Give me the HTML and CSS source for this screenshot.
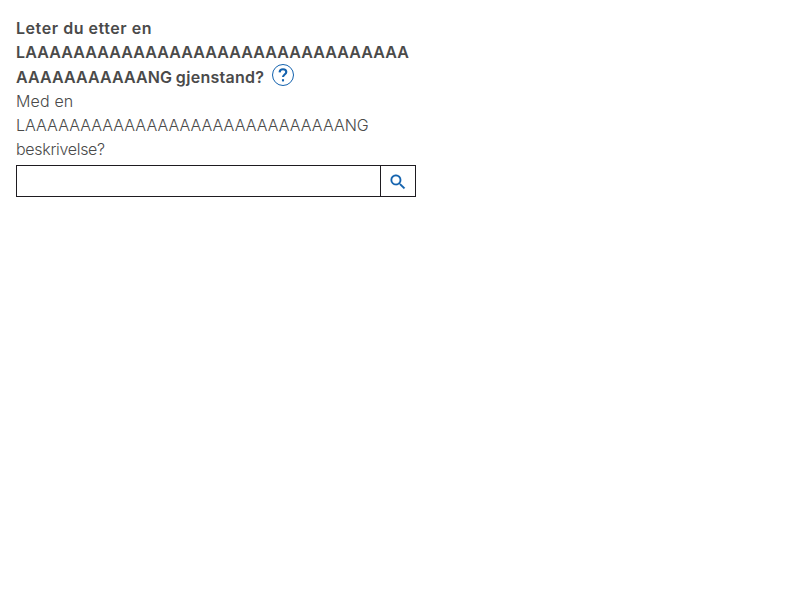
FILE: index.html
```html
<!DOCTYPE html>
<html lang="nb">
<head>
<meta charset="utf-8">
<title>Søk</title>
<link rel="stylesheet" href="styles.css">
</head>
<body>
<div class="field">
  <div class="label-row">
    <label class="label" for="search"><span class="intro">Leter du etter en</span> <span class="long">LAAAAAAAAAAAAAAAAAAAAAAAAAAAAAAAAAAAAAAAAAAANG</span> gjenstand?</label>
    <button class="help" type="button"><svg class="help-icon" viewBox="0 0 22 22"><circle cx="11" cy="11" r="10.5"/><path d="M7.6 8.4C7.7 6.5 9.1 5.2 11 5.2c2 0 3.3 1.2 3.3 2.9 0 2.3-3.3 2.6-3.3 4.9"/><path d="M11 15.2v2.2"/></svg></button>
  </div>
  <div class="description"><span class="start">Med en</span> <span class="long-desc">LAAAAAAAAAAAAAAAAAAAAAAAAAAAAANG</span> <span class="end">beskrivelse?</span></div>
  <div class="search">
    <input class="input" id="search" type="text">
    <button class="submit" type="button"><svg class="search-icon" viewBox="0 0 24 24"><path d="M15.5 14h-.79l-.28-.27A6.471 6.471 0 0 0 16 9.5 6.5 6.5 0 1 0 9.5 16c1.61 0 3.09-.59 4.23-1.57l.27.28v.79l5 4.99L20.49 19l-4.99-5zm-6 0C7.01 14 5 11.99 5 9.5S7.01 5 9.5 5 14 7.01 14 9.5 11.99 14 9.5 14z"/></svg></button>
  </div>
</div>
</body>
</html>
```
FILE: styles.css
```css
* { box-sizing: border-box; }
body {
  margin: 16px;
  font: 16px/24.4px Inter, sans-serif;
  color: #4a4a4a;
  background: #fff;
}
.field { width: 400px; }
.label-row { height: 73px; overflow-wrap: break-word; }
.label { font-weight: 600; letter-spacing: 0.28px; word-spacing: -0.7px; }
.intro { letter-spacing: 0.55px; word-spacing: 0; }
.long { letter-spacing: 0.13px; }
.help {
  display: inline-block;
  width: 22px;
  height: 22px;
  margin: -3px 0 -3px 3px;
  padding: 0;
  border: 0;
  background: none;
  vertical-align: -3px;
}
.help-icon { display: block; fill: none; stroke: #1362ae; }
.help-icon path { stroke-width: 2.1; }
.description {
  height: 72px;
  margin-bottom: 4px;
  line-height: 24px;
  font-weight: 350;
  overflow-wrap: break-word;
}
.start { letter-spacing: 0.15px; }
.long-desc { letter-spacing: 0; }
.end { letter-spacing: -0.3px; }
.search { display: flex; height: 32px; border: 1px solid #1e1b20; }
.input { flex: 1; min-width: 0; border: 0; padding: 0 8px; outline: 0; }
.submit {
  width: 35px;
  padding: 0;
  border: 0;
  border-left: 1px solid #1e1b20;
  background: #fff;
  display: flex;
  align-items: center;
  justify-content: center;
}
.search-icon { width: 20px; height: 20px; margin-top: 2px; fill: #1362ae; stroke: #1362ae; stroke-width: 0.2; }
```
